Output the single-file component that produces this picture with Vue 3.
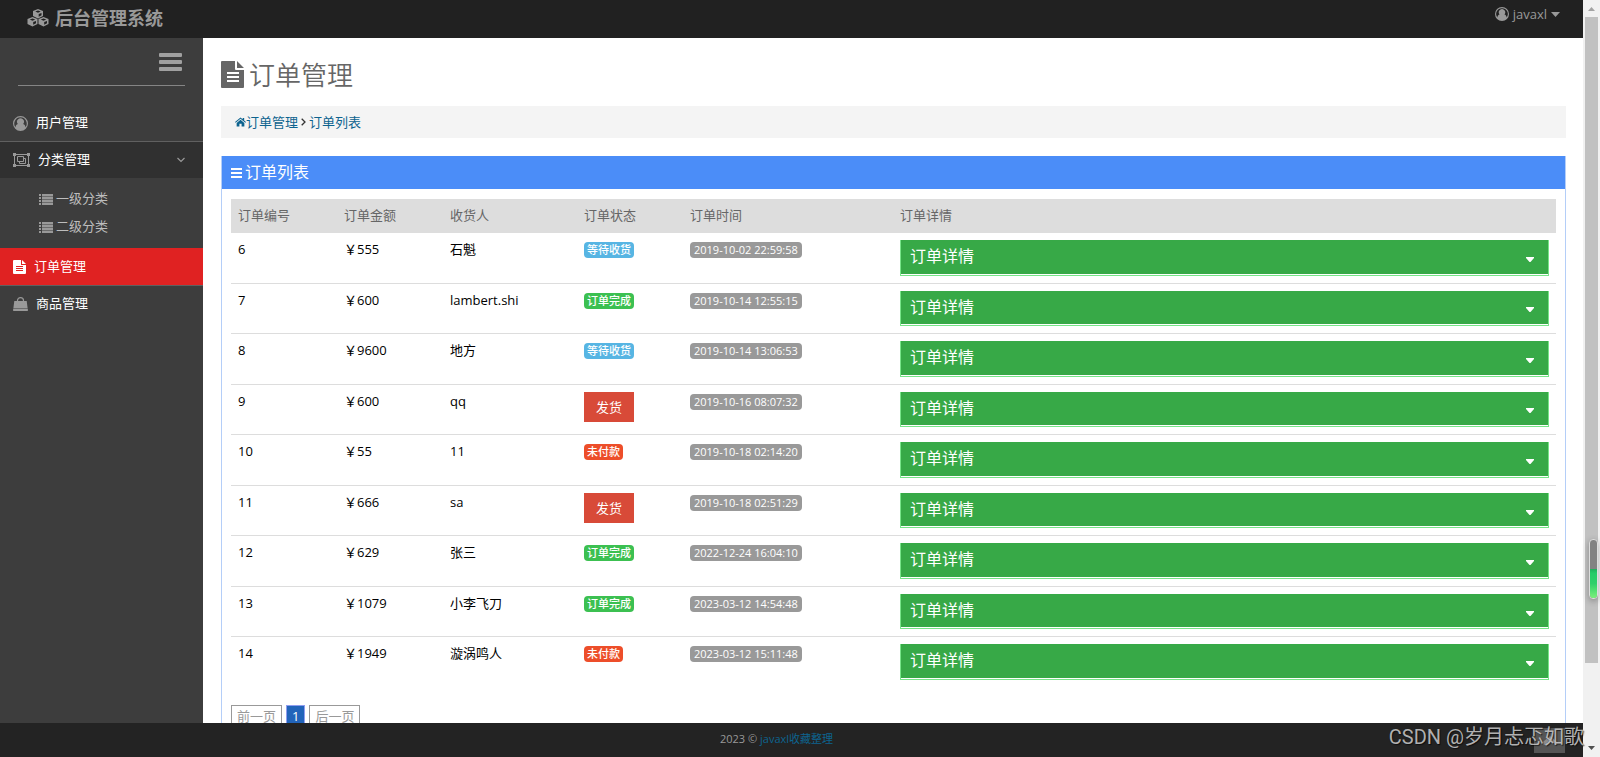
<script setup>
const orders = [
  { id: 6, amount: 555, name: '石魁', status: 'wait', time: '2019-10-02 22:59:58' },
  { id: 7, amount: 600, name: 'lambert.shi', status: 'done', time: '2019-10-14 12:55:15' },
  { id: 8, amount: 9600, name: '地方', status: 'wait', time: '2019-10-14 13:06:53' },
  { id: 9, amount: 600, name: 'qq', status: 'send', time: '2019-10-16 08:07:32' },
  { id: 10, amount: 55, name: '11', status: 'unpaid', time: '2019-10-18 02:14:20' },
  { id: 11, amount: 666, name: 'sa', status: 'send', time: '2019-10-18 02:51:29' },
  { id: 12, amount: 629, name: '张三', status: 'done', time: '2022-12-24 16:04:10' },
  { id: 13, amount: 1079, name: '小李飞刀', status: 'done', time: '2023-03-12 14:54:48' },
  { id: 14, amount: 1949, name: '漩涡鸣人', status: 'unpaid', time: '2023-03-12 15:11:48' },
]
const statusText = { wait: '等待收货', done: '订单完成', unpaid: '未付款' }
const columns = ['订单编号', '订单金额', '收货人', '订单状态', '订单时间', '订单详情']
const categories = ['一级分类', '二级分类']
</script>

<template>
  <div class="screen">
    <div class="app">
      <header class="topbar">
        <a class="brand" href="#">
          <svg width="22" height="18" viewBox="0 0 22 18" aria-hidden="true">
            <defs>
              <path id="cube" fill-rule="evenodd" d="M11 0l5 2v5l-5 2.600L6 7V2zM8.300 2.600L11 3.700l2.700-1.100L11 1.500zM11.700 5.100v2.600l2.800-1.500V3.900z" />
            </defs>
            <g fill="currentColor">
              <use href="#cube" />
              <use href="#cube" x="-5.500" y="8" />
              <use href="#cube" x="5.500" y="8" />
            </g>
          </svg>
          <span>后台管理系统</span>
        </a>
        <button class="account" type="button">
          <svg width="14" height="14" viewBox="0 0 14 14" aria-hidden="true">
            <path fill="currentColor" fill-rule="evenodd" d="M7 0a7 7 0 1 1 0 14A7 7 0 0 1 7 0zM7 1.200a5.800 5.800 0 0 0-4.700 9.200c.3-1.700 1-2.700 2.200-3a3.200 3.200 0 1 1 5 0c1.200.3 1.900 1.300 2.200 3A5.800 5.800 0 0 0 7 1.200z" />
          </svg>
          <span>javaxl</span>
          <svg width="9" height="5" viewBox="0 0 9 5" aria-hidden="true"><path fill="currentColor" d="M0 0h9L4.500 5z" /></svg>
        </button>
      </header>

      <div class="body">
        <nav class="sidebar">
          <div class="toggle-row">
            <button class="toggle" type="button" aria-label="菜单">
              <svg width="23" height="18" viewBox="0 0 23 18" aria-hidden="true">
                <path fill="currentColor" d="M1 0h21a1 1 0 0 1 1 1v2a1 1 0 0 1-1 1H1a1 1 0 0 1-1-1V1a1 1 0 0 1 1-1zM1 7h21a1 1 0 0 1 1 1v2a1 1 0 0 1-1 1H1a1 1 0 0 1-1-1V8a1 1 0 0 1 1-1zM1 14h21a1 1 0 0 1 1 1v2a1 1 0 0 1-1 1H1a1 1 0 0 1-1-1v-2a1 1 0 0 1 1-1z" />
              </svg>
            </button>
          </div>
          <ul class="menu">
            <li>
              <a class="item" href="#">
                <svg width="15" height="15" viewBox="0 0 14 14" aria-hidden="true">
                  <path fill="currentColor" fill-rule="evenodd" d="M7 0a7 7 0 1 1 0 14A7 7 0 0 1 7 0zM7 1.200a5.800 5.800 0 0 0-4.700 9.200c.3-1.700 1-2.700 2.200-3a3.200 3.200 0 1 1 5 0c1.200.3 1.900 1.300 2.200 3A5.800 5.800 0 0 0 7 1.200z" />
                </svg>
                <span>用户管理</span>
              </a>
            </li>
            <li class="ruled">
              <a class="item open" href="#">
                <svg width="17" height="14" viewBox="0 0 17 14" aria-hidden="true">
                  <g fill="none" stroke="currentColor">
                    <path d="M2.500 1.500h12M2.500 12.500h12M1.500 2.500v9M15.500 2.500v9" />
                    <path d="M4.500 3.500h6v5h-6z" />
                    <path d="M10.500 5.500h2v5h-6v-2" />
                  </g>
                  <path fill="currentColor" d="M0 0h3v3H0zM14 0h3v3h-3zM0 11h3v3H0zM14 11h3v3h-3z" />
                </svg>
                <span>分类管理</span>
                <svg class="chevron" width="8" height="6" viewBox="0 0 8 6" aria-hidden="true"><path fill="none" stroke="currentColor" stroke-width="1.200" d="M.5 1L4 4.500 7.500 1" /></svg>
              </a>
              <ul class="submenu">
                <li v-for="c in categories" :key="c">
                  <a href="#">
                    <svg width="14" height="11" viewBox="0 0 14 11" aria-hidden="true">
                      <path fill="currentColor" d="M0 0h2v2H0zM3 0h11v2H3zM0 3h2v2H0zM3 3h11v2H3zM0 6h2v2H0zM3 6h11v2H3zM0 9h2v2H0zM3 9h11v2H3z" />
                      <path fill="currentColor" opacity=".5" d="M3 2h11v1H3zM3 5h11v1H3zM3 8h11v1H3z" />
                    </svg>
                    <span>{{ c }}</span>
                  </a>
                </li>
              </ul>
            </li>
            <li>
              <a class="item active" href="#">
                <svg width="13" height="14" viewBox="0 0 13 14" aria-hidden="true">
                  <path fill="currentColor" fill-rule="evenodd" d="M1 0h7v5h5v8a1 1 0 0 1-1 1H1a1 1 0 0 1-1-1V1a1 1 0 0 1 1-1zM9 0l4 4H9zM3 6v1h7V6zM3 8v1h7V8zM3 10v1h7v-1z" />
                </svg>
                <span>订单管理</span>
              </a>
            </li>
            <li class="ruled">
              <a class="item" href="#">
                <svg width="15" height="14" viewBox="0 0 15 14" aria-hidden="true">
                  <path fill="currentColor" d="M1.300 4h12.400l.9 7H.4zM.3 11.600h14.400l.3 1.700a.7.7 0 0 1-.7.700H.7a.7.7 0 0 1-.7-.7z" />
                  <path fill="none" stroke="currentColor" stroke-width="1.200" d="M4.500 5V3.600a3 3 0 0 1 6 0V5" />
                </svg>
                <span>商品管理</span>
              </a>
            </li>
          </ul>
        </nav>

        <main class="content">
          <h1>
            <svg width="23" height="27" viewBox="0 0 23 27" aria-hidden="true">
              <path fill="currentColor" fill-rule="evenodd" d="M1 0h13v8a1 1 0 0 0 1 1h8v17a1 1 0 0 1-1 1H1a1 1 0 0 1-1-1V1a1 1 0 0 1 1-1zM16 0l7 7h-7zM6 11v2h12v-2zM6 15v2h12v-2zM6 19v2h12v-2z" />
            </svg>
            <span>订单管理</span>
          </h1>

          <nav class="crumbs">
            <a href="#">
              <svg width="11" height="10" viewBox="0 0 12 10" aria-hidden="true">
                <path fill="currentColor" d="M6 0l2.400 2V.6H10v2.800L12 5.100l-.7.8L6 1.500.7 5.900 0 5.100zM6 2.500l4.200 3.500v4H7.200V7H4.800v3h-3V6z" />
              </svg>
              <span>订单管理</span>
            </a>
            <svg width="5" height="8" viewBox="0 0 5 8" aria-hidden="true"><path fill="none" stroke="#333" stroke-width="1.300" d="M.7.700L4 4 .7 7.300" /></svg>
            <a href="#">订单列表</a>
          </nav>

          <section class="panel">
            <h2>
              <svg width="11" height="10" viewBox="0 0 11 10" aria-hidden="true"><path fill="currentColor" d="M0 0h11v2H0zM0 4h11v2H0zM0 8h11v2H0z" /></svg>
              <span>订单列表</span>
            </h2>
            <div class="panel-body">
              <table>
                <colgroup>
                  <col class="c-id"><col class="c-amount"><col class="c-name"><col class="c-status"><col class="c-time"><col>
                </colgroup>
                <thead>
                  <tr><th v-for="c in columns" :key="c" scope="col">{{ c }}</th></tr>
                </thead>
                <tbody>
                  <tr v-for="o in orders" :key="o.id">
                    <td>{{ o.id }}</td>
                    <td>￥{{ o.amount }}</td>
                    <td>{{ o.name }}</td>
                    <td>
                      <button v-if="o.status === 'send'" class="send" type="button">发货</button>
                      <span v-else class="badge" :class="o.status">{{ statusText[o.status] }}</span>
                    </td>
                    <td><span class="badge time">{{ o.time }}</span></td>
                    <td>
                      <button class="detail" type="button">
                        <span>订单详情</span>
                        <svg width="8" height="5" viewBox="0 0 8 5" aria-hidden="true"><path fill="currentColor" d="M0 0h8v1L4.500 5h-1L0 1z" /></svg>
                      </button>
                    </td>
                  </tr>
                </tbody>
              </table>
              <div class="pager">
                <button type="button">前一页</button>
                <button type="button" class="current">1</button>
                <button type="button">后一页</button>
              </div>
            </div>
          </section>
        </main>
      </div>

      <footer class="footer">
        <span>2023 © <a href="#">javaxl收藏整理</a></span>
        <button class="to-top" type="button" aria-label="返回顶部">
          <svg width="16" height="9" viewBox="0 0 16 9" aria-hidden="true"><path fill="none" stroke="#8c8c8c" stroke-width="3" d="M1 8l7-6 7 6" /></svg>
        </button>
      </footer>
    </div>

    <div class="scrollbar">
      <svg width="7" height="4" viewBox="0 0 7 4" aria-hidden="true"><path fill="#a3a3a3" d="M0 4h7L3.500 0z" /></svg>
      <div class="track"><div class="thumb"></div></div>
      <svg width="7" height="4" viewBox="0 0 7 4" aria-hidden="true"><path fill="#505050" d="M0 0h7L3.500 4z" /></svg>
    </div>
    <div class="gauge"><div class="gauge-fill"></div></div>
    <div class="watermark">CSDN @岁月忐忑如歌</div>
  </div>
</template>

<style>
body {
  margin: 0;
}
</style>

<style scoped>
.screen {
  position: relative;
  display: flex;
  height: 100vh;
  overflow: hidden;
  background: #fff;
  color: #000;
  font-family: "Open Sans", "Noto Sans CJK SC", sans-serif;
  font-size: 13px;
  line-height: 18px;
}
.screen *,
.screen *::before {
  box-sizing: border-box;
}
svg {
  display: block;
  flex: none;
}
a {
  color: inherit;
  text-decoration: none;
}
button {
  margin: 0;
  padding: 0;
  border: 0;
  background: none;
  color: inherit;
  font: inherit;
  cursor: pointer;
}
ul {
  margin: 0;
  padding: 0;
  list-style: none;
}
.app {
  flex: 1;
  min-width: 0;
  display: flex;
  flex-direction: column;
}
.topbar {
  flex: none;
  display: flex;
  justify-content: space-between;
  align-items: flex-start;
  height: 38px;
  padding: 0 23px 0 27px;
  background: #212121;
  color: #999;
}
.brand {
  display: flex;
  align-items: center;
  gap: 6px;
  height: 36px;
  font-size: 18px;
  font-weight: 700;
}
.account {
  display: flex;
  align-items: center;
  gap: 4px;
  height: 28px;
}
.body {
  flex: 1;
  min-height: 0;
  display: flex;
}
.sidebar {
  flex: none;
  width: 203px;
  background: #3d3d3d;
}
.toggle-row {
  display: flex;
  justify-content: flex-end;
  height: 48px;
  margin: 0 18px 19px;
  padding: 15px 3px 0 0;
  border-bottom: 1px solid #858585;
}
.toggle {
  align-self: flex-start;
  color: #a0a0a0;
}
.item {
  display: flex;
  align-items: center;
  gap: 8px;
  height: 36px;
  padding: 0 18px 0 13px;
  color: #999;
}
.item span {
  padding-bottom: 2px;
  color: #fff;
}
.ruled {
  border-top: 1px solid #606060;
}
.item.open {
  background: #303030;
}
.chevron {
  margin-left: auto;
}
.item.active {
  height: 37px;
  background: #e02222;
  color: #fff;
}
.submenu {
  padding: 7px 0;
}
.submenu a {
  display: flex;
  align-items: center;
  gap: 3px;
  height: 28px;
  padding-left: 39px;
  color: #999;
}
.submenu span {
  padding-bottom: 2px;
  color: #bdbdbd;
}
.content {
  flex: 1;
  min-width: 0;
  overflow: hidden;
  padding: 18px 17px 0 18px;
}
h1 {
  display: flex;
  align-items: center;
  gap: 5px;
  height: 36px;
  margin: 0 0 14px;
  color: #666;
  font-size: 26px;
  font-weight: 400;
}
h1 span {
  font-family: "Noto Sans CJK SC", sans-serif;
  font-weight: 350;
}
.crumbs {
  display: flex;
  align-items: center;
  gap: 3px;
  height: 32px;
  margin-bottom: 18px;
  padding: 0 14px;
  background: #f4f4f4;
  color: #0d638f;
}
.crumbs a {
  display: flex;
  align-items: center;
}
.panel {
  border: 1px solid #b4cef8;
  border-top: 0;
}
h2 {
  display: flex;
  align-items: center;
  gap: 3px;
  height: 33px;
  margin: 0;
  padding: 0 9px;
  background: #4b8df8;
  color: #fff;
  font-size: 16px;
  font-weight: 400;
}
h2 span {
  padding-bottom: 2px;
}
.panel-body {
  padding: 10px 9px;
}
table {
  width: 100%;
  table-layout: fixed;
  border-collapse: separate;
  border-spacing: 0;
}
.c-id,
.c-amount,
.c-status {
  width: 106px;
}
.c-name {
  width: 134px;
}
.c-time {
  width: 210px;
}
th {
  height: 34px;
  padding: 0 7px 2px;
  background: #ddd;
  color: #666;
  font-weight: 400;
  text-align: left;
}
td {
  padding: 7px;
  vertical-align: top;
}
tr + tr td {
  border-top: 1px solid #ddd;
}
.badge {
  display: block;
  width: fit-content;
  height: 16px;
  margin-top: 2px;
  padding: 0 3px;
  border-radius: 4px;
  color: #fff;
  font-size: 11px;
  font-weight: 500;
  line-height: 16px;
  white-space: nowrap;
}
.wait {
  background: #57b5e3;
}
.done {
  background: #3cc051;
}
.unpaid {
  background: #ed4e2a;
}
.time {
  padding: 0 4px;
  background: #999;
}
.send {
  display: block;
  height: 30px;
  padding: 0 12px;
  background: #d84a38;
  color: #fff;
}
.detail {
  display: flex;
  align-items: center;
  justify-content: space-between;
  width: 100%;
  padding: 5px 14px 7px 9px;
  border: 1px solid #77e588;
  border-top: 0;
  background: #37a947;
  box-shadow: inset 0 -1px #fff;
  color: #fff;
  font-size: 16px;
  line-height: 1.41;
}
.detail svg {
  margin-top: 6px;
}
.pager {
  display: flex;
  gap: 4px;
  margin-top: 18px;
}
.pager button {
  height: 22px;
  padding: 0 5px;
  border: 1px solid #999;
  color: #999;
}
.pager .current {
  border-color: #8f9df0;
  background: #2264ba;
  color: #fff;
}
.footer {
  flex: none;
  position: relative;
  display: flex;
  justify-content: center;
  height: 34px;
  padding-top: 7px;
  padding-right: 30px;
  background: #232323;
  color: #999;
  font-size: 11px;
}
.footer a {
  color: #0d638f;
}
.to-top {
  position: absolute;
  top: 5px;
  right: 18px;
  display: flex;
  align-items: center;
  justify-content: center;
  width: 31px;
  height: 25px;
  background: #555;
}
.scrollbar {
  flex: none;
  display: flex;
  flex-direction: column;
  align-items: center;
  gap: 6px;
  width: 17px;
  padding: 7px 0;
  background: #f1f1f1;
}
.track {
  flex: 1;
  width: 13px;
}
.thumb {
  height: 92%;
  max-height: 646px;
  background: #c1c1c1;
}
.gauge {
  position: absolute;
  top: 539px;
  right: 2px;
  display: flex;
  align-items: flex-end;
  width: 9px;
  height: 60px;
  border: 1px solid #ddd;
  border-radius: 4px;
  background: #828282;
  box-shadow: 0 2px 6px rgba(0, 0, 0, 0.3);
  overflow: hidden;
}
.gauge-fill {
  width: 100%;
  height: 50%;
  background: linear-gradient(#1faf5c, #24cc68 15%, #2ed06a 50%, #7cf07c);
}
.watermark {
  position: absolute;
  right: 16px;
  bottom: 5px;
  color: rgba(205, 205, 205, 0.85);
  font-family: Roboto, "Noto Sans CJK SC", sans-serif;
  font-size: 20px;
  line-height: 30px;
  text-shadow: 1px 1px 1px rgba(0, 0, 0, 0.6);
  white-space: nowrap;
}
</style>
